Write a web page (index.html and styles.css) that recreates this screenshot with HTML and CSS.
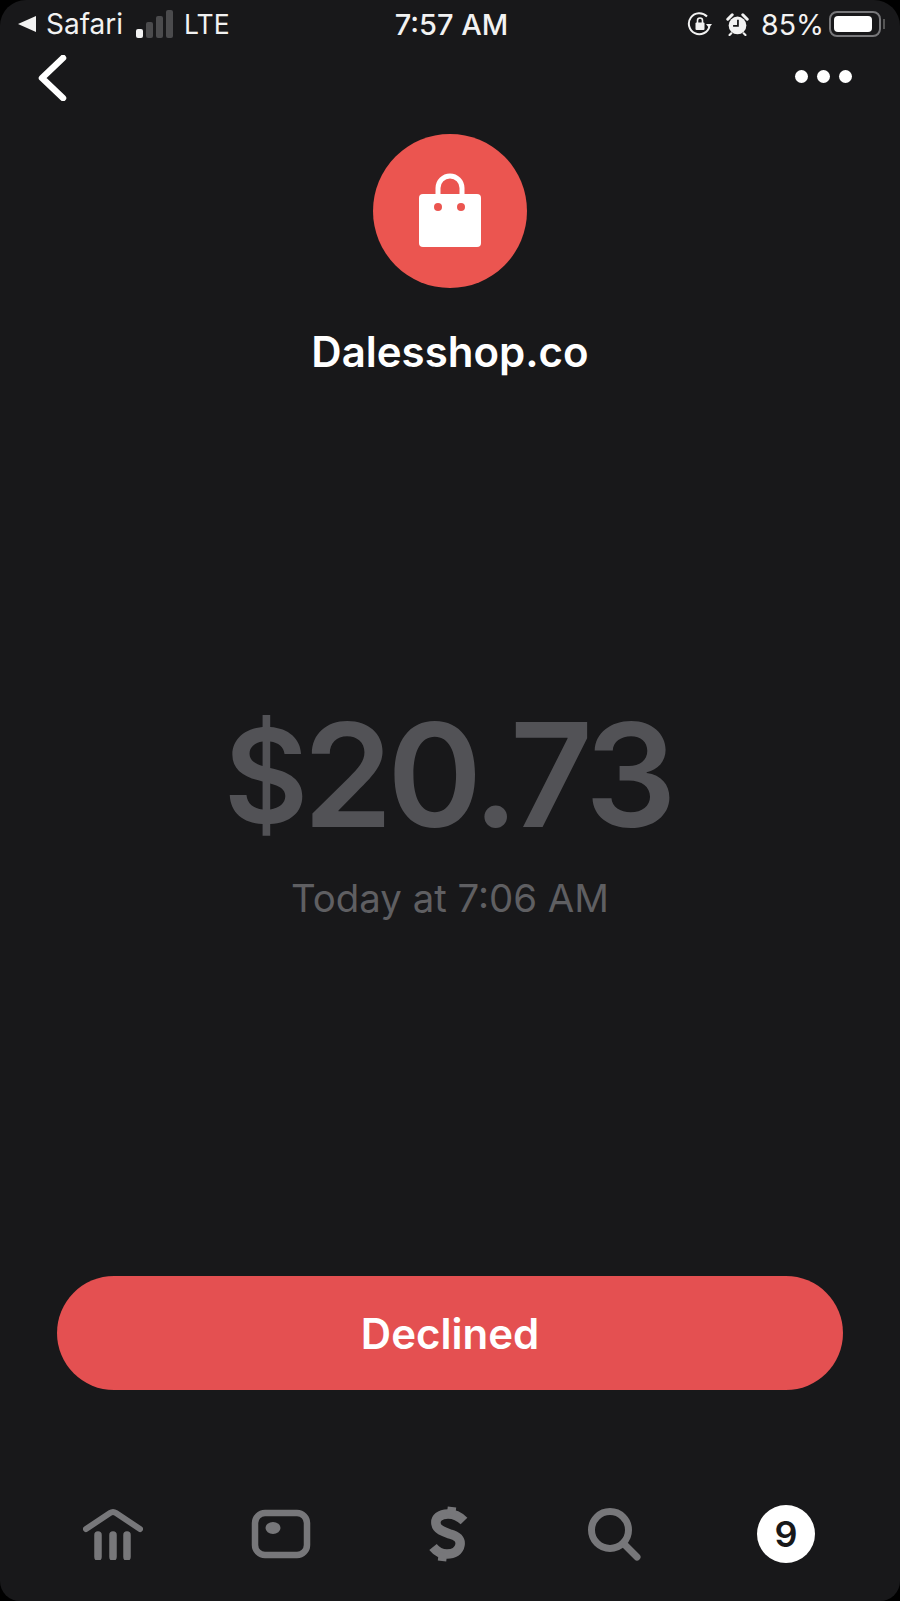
FILE: index.html
```html
<!DOCTYPE html>
<html>
  <head>
    <meta charset="utf-8">
    <meta name="viewport" content="width=device-width, initial-scale=1">

    <title>Dalesshop.co</title>
    <link rel="stylesheet" href="styles.css">
  </head>
  <body>

    <div class="screen">

      <div class="status-bar">
	<div class="status-left">
	  <svg class="back-arrow" width="18" height="16" viewBox="0 0 18 16"><path d="M0 8 18 0V16Z" fill="#f2f2f2"/></svg>
	  <span class="app-name">Safari</span>
	  <div class="signal">
	    <i class="on"></i><i></i><i></i><i></i>
	  </div>
	  <span class="network">LTE</span>
	</div>
	<div class="status-time">7:57 AM</div>
	<div class="status-right">
	  <svg width="26" height="26" viewBox="0 0 26 26">
	    <path d="M22.5 15.5A10.5 10.5 0 1 1 20 5.5" fill="none" stroke="#f2f2f2" stroke-width="2"/>
	    <path d="M19 13h6l-3 4z" fill="#f2f2f2"/>
	    <rect x="8.5" y="11.5" width="9" height="7.5" rx="1" fill="#f2f2f2"/>
	    <path d="M10.5 12V9.5a2.5 2.5 0 0 1 5 0V12" fill="none" stroke="#f2f2f2" stroke-width="1.6"/>
	  </svg>
	  <svg class="alarm" width="23" height="23" viewBox="0 0 26 26">
	    <circle cx="13" cy="14" r="10" fill="#f2f2f2"/>
	    <path d="M2 7 7 2M19 2l5 5" stroke="#f2f2f2" stroke-width="3.4" stroke-linecap="round"/>
	    <path d="M6 23l-2 2M20 23l2 2" stroke="#f2f2f2" stroke-width="2.4" stroke-linecap="round"/>
	    <path d="M13.5 7.5V14.5H8" fill="none" stroke="#18181a" stroke-width="2"/>
	  </svg>
	  <span class="percent">85%</span>
	  <div class="battery"><div class="battery-level"></div></div>
	  <div class="battery-tip"></div>
	</div>
      </div>

      <div class="top-nav">
	<svg width="30" height="46" viewBox="0 0 30 46"><path d="M26 3 5 23 26 43" fill="none" stroke="#fff" stroke-width="6.5" stroke-linecap="round" stroke-linejoin="round"/></svg>
	<div class="dots"><span></span><span></span><span></span></div>
      </div>

      <div class="merchant">
	<div class="avatar">
	  <svg width="62" height="74" viewBox="0 0 62 74">
	    <path d="M19 24V15a12 12 0 0 1 24 0V24" fill="none" stroke="#fff" stroke-width="5"/>
	    <path d="M4 21H58a4 4 0 0 1 4 4V70a4 4 0 0 1-4 4H4a4 4 0 0 1-4-4V25a4 4 0 0 1 4-4Z" fill="#fff"/>
	    <circle cx="19" cy="34" r="4" fill="#eb5550"/>
	    <circle cx="42" cy="34" r="4" fill="#eb5550"/>
	  </svg>
	</div>
	<h1>Dalesshop.co</h1>
      </div>

      <div class="payment">
	<div class="amount"><span class="currency">$</span>20.73</div>
	<div class="when">Today at 7:06 AM</div>
      </div>

      <div class="action">
	<button type="button">Declined</button>
      </div>

      <div class="tabs">
	<div class="tab">
	  <svg width="60" height="52" viewBox="0 0 60 52">
	    <path d="M3 21 27 5Q30 3 33 5L57 21" fill="none" stroke="#77777a" stroke-width="6" stroke-linecap="round"/>
	    <path d="M15 27V49M30 27V49M44 27V49" fill="none" stroke="#77777a" stroke-width="7.5" stroke-linecap="round"/>
	  </svg>
	</div>
	<div class="tab">
	  <svg width="60" height="50" viewBox="0 0 60 50">
	    <rect x="4" y="4" width="52" height="42" rx="10" fill="none" stroke="#77777a" stroke-width="6.5"/>
	    <ellipse cx="22" cy="19" rx="7.5" ry="6" fill="#77777a"/>
	  </svg>
	</div>
	<div class="tab">
	  <svg width="40" height="56" viewBox="0 0 40 56">
	    <path d="M35 15C30 10 25 8 19 8C11 8 6 12 7 18C8 24 15 26 21 28C28 30 32 33 31 39C30 45 25 48 18 48C13 48 8 46 4 41" fill="none" stroke="#77777a" stroke-width="9.5"/>
	    <path d="M23 1 22 9M14 47 13 55" fill="none" stroke="#77777a" stroke-width="8.5"/>
	  </svg>
	</div>
	<div class="tab">
	  <svg width="60" height="56" viewBox="0 0 60 56">
	    <circle cx="22" cy="24" r="18.5" fill="none" stroke="#77777a" stroke-width="7"/>
	    <path d="M36 38 49 51" fill="none" stroke="#77777a" stroke-width="7" stroke-linecap="round"/>
	  </svg>
	</div>
	<div class="tab">
	  <div class="tab-badge">9</div>
	</div>
      </div>

    </div>

  </body>
</html>
```

FILE: styles.css
```css
body {
    margin: 0;
    background: #000;
    font-family: Inter, "Liberation Sans", sans-serif;
}

.screen {
    width: 900px;
    height: 1601px;
    overflow: hidden;
    background: #18181a;
    border-radius: 26px 26px 20px 20px;
    display: flex;
    flex-direction: column;
}

/* status bar */

.status-bar {
    height: 48px;
    padding: 0 15px 0 18px;
    display: grid;
    grid-template-columns: 1fr auto 1fr;
    align-items: center;
    color: #f2f2f2;
    font-size: 28.5px;
}

.status-left,
.status-right {
    display: flex;
    align-items: center;
}

.status-right {
    justify-content: flex-end;
}

.back-arrow {
    margin-right: 10px;
}

.app-name {
    font-size: 28px;
}

.network {
    font-size: 26.5px;
}

.signal {
    display: flex;
    align-items: flex-end;
    gap: 3px;
    height: 28px;
    margin: 0 11px 0 13px;
}

.signal i {
    width: 7px;
    height: 28px;
    border-radius: 2px;
    background: #4b4b4d;
}

.signal i:nth-child(1) { height: 9px; }
.signal i:nth-child(2) { height: 16px; }
.signal i:nth-child(3) { height: 22px; }

.signal i.on {
    background: #f2f2f2;
}

.status-time {
    font-size: 29px;
    font-weight: 500;
}

.alarm {
    margin-left: 13px;
}

.percent {
    margin: 0 5px 0 12px;
}

.battery {
    width: 52px;
    height: 26px;
    box-sizing: border-box;
    padding: 3px;
    border: 2px solid #77777a;
    border-radius: 8px;
}

.battery-level {
    width: 38px;
    height: 16px;
    border-radius: 4px;
    background: #fff;
}

.battery-tip {
    width: 2px;
    height: 10px;
    margin-left: 2px;
    background: #555;
}

/* top nav */

.top-nav {
    height: 54px;
    padding: 3px 48px 0 37px;
    display: flex;
    justify-content: space-between;
    align-items: center;
}

.dots {
    display: flex;
    gap: 9px;
    margin-bottom: 4px;
}

.dots span {
    width: 13px;
    height: 13px;
    border-radius: 50%;
    background: #fff;
}

/* merchant */

.merchant {
    margin-top: 29px;
    display: flex;
    flex-direction: column;
    align-items: center;
}

.avatar {
    width: 154px;
    height: 154px;
    border-radius: 50%;
    background: #eb5550;
    display: flex;
    align-items: center;
    justify-content: center;
}

.avatar svg {
    margin-bottom: 3px;
}

h1 {
    margin: 34px 0 0;
    font-size: 42px;
    line-height: 60px;
    font-weight: 600;
    color: #fff;
}

/* payment */

.payment {
    margin-top: 306px;
    text-align: center;
}

.amount {
    padding-right: 5px;
    font-size: 144px;
    line-height: 174px;
    font-weight: 600;
    letter-spacing: -5.5px;
    color: #525256;
}

.currency {
    font-size: 130px;
    vertical-align: 4px;
    line-height: 1;
}

.when {
    margin-top: 14px;
    font-size: 38.4px;
    line-height: 44px;
    color: #5f5f62;
}

/* button */

.action {
    margin-top: 356px;
    padding: 0 57px;
}

button {
    width: 100%;
    height: 114px;
    border: none;
    border-radius: 57px;
    background: #e45051;
    color: #fff;
    font-family: inherit;
    font-size: 42px;
    font-weight: 600;
}

/* tabs */

.tabs {
    margin-top: 115px;
    padding: 0 30px 0 29px;
    display: grid;
    grid-template-columns: repeat(5, 1fr);
    align-items: center;
}

.tab {
    display: flex;
    justify-content: center;
    align-items: center;
}

.tab-badge {
    width: 58px;
    height: 58px;
    border-radius: 50%;
    background: #fff;
    color: #18181a;
    display: flex;
    align-items: center;
    justify-content: center;
    font-size: 36px;
    font-weight: 600;
}
```
